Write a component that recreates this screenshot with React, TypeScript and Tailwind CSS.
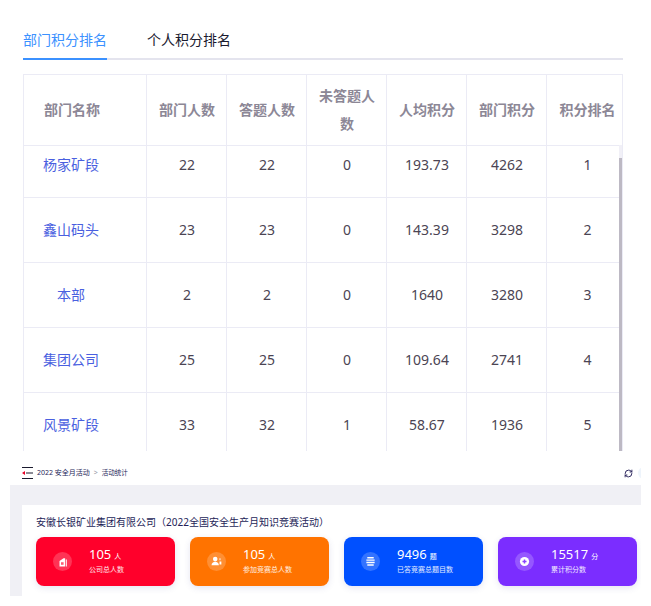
import { RefreshCw } from 'lucide-react';
import type { ReactNode } from 'react';

const font = { cn: "font-['Noto_Sans','Noto_Sans_CJK_SC',sans-serif]" };

const columns = ['部门名称', '部门人数', '答题人数', '未答题人数', '人均积分', '部门积分', '积分排名'];

const rows = [
  { name: '杨家矿段', values: ['22', '22', '0', '193.73', '4262', '1'], height: 'h-[52px]', pad: 'pb-[15px]' },
  { name: '鑫山码头', values: ['23', '23', '0', '143.39', '3298', '2'], height: 'h-[65px]', pad: 'pb-[2px]' },
  { name: '本部', values: ['2', '2', '0', '1640', '3280', '3'], height: 'h-[65px]', pad: 'pb-[2px]' },
  { name: '集团公司', values: ['25', '25', '0', '109.64', '2741', '4'], height: 'h-[65px]', pad: 'pb-[2px]' },
  { name: '风景矿段', values: ['33', '32', '1', '58.67', '1936', '5'], height: 'h-[65px]', pad: 'pb-[2px]' },
];

const stats: { value: string; unit: string; label: string; color: string; icon: ReactNode }[] = [
  {
    value: '105',
    unit: '人',
    label: '公司总人数',
    color: 'bg-[#ff002b]',
    icon: (
      <svg viewBox="0 0 10 10" className="h-[10px] w-[10px]" fill="white">
        <path d="M1.5 4 5.5 1.2h1.6V9.5H1.5z" />
        <path d="M7.8 2.5h1V9.5h-1z" />
        <path d="M3 5.2h2.6v2.6H3z" fill="#ff5a74" />
      </svg>
    ),
  },
  {
    value: '105',
    unit: '人',
    label: '参加竞赛总人数',
    color: 'bg-[#ff7300]',
    icon: (
      <svg viewBox="0 0 12 12" className="h-[11px] w-[11px]" fill="white">
        <circle cx="4.6" cy="3.4" r="2.5" />
        <path d="M.6 10.2c0-2.6 1.8-4 4-4s4 1.4 4 4z" />
        <path d="M9.3 2.4h1v2.2h-1zM9.3 6h2v3.4h-2z" />
      </svg>
    ),
  },
  {
    value: '9496',
    unit: '题',
    label: '已答竞赛总题目数',
    color: 'bg-[#0050ff]',
    icon: (
      <svg viewBox="0 0 12 12" className="h-[11px] w-[11px]" fill="white">
        <path d="M2.5 1h7v1.6h-7zM1.5 3.7h9v1.6h-9zM1.5 6.4h9V8h-9zM2.5 9.1h7v1.6h-7z" />
      </svg>
    ),
  },
  {
    value: '15517',
    unit: '分',
    label: '累计积分数',
    color: 'bg-[#7b2dff]',
    icon: (
      <svg viewBox="0 0 12 12" className="h-[11px] w-[11px]">
        <circle cx="6" cy="6" r="5" fill="white" />
        <path d="M5.2 3.8h1.6v1.4h1.4v1.6H6.8v1.4H5.2V6.8H3.8V5.2h1.4z" fill="#8a45ff" />
      </svg>
    ),
  },
];

function ScoreTable() {
  return (
    <div className="relative mx-[23px] mt-[14px] h-[377px] w-[600px] overflow-hidden">
      <table className="w-[600px] table-fixed border-collapse border-t border-l border-[#ebebf5]">
        <colgroup>
          <col className="w-[123px]" />
          <col className="w-[80px]" />
          <col className="w-[80px]" />
          <col className="w-[80px]" />
          <col className="w-[80px]" />
          <col className="w-[80px]" />
          <col className="w-[76px]" />
        </colgroup>
        <thead>
          <tr className="h-[71px]">
            {columns.map((col, i) => (
              <th
                key={col}
                className={`border border-[#ebebf5] text-[14px] leading-[28px] font-bold text-[#8c8796] ${
                  i === 0
                    ? 'pr-[36px] pl-[20px] text-left'
                    : i === 6
                      ? 'pr-0 pl-[6px] text-center'
                      : 'pr-[10px] pl-[11px] text-center'
                }`}
              >
                {col}
              </th>
            ))}
          </tr>
        </thead>
        <tbody>
          {rows.map((row) => (
            <tr key={row.name} className={row.height}>
              <td className={`border border-[#ebebf5] pl-[19px] text-[14px] text-[#4a5fe0] ${row.pad}`}>
                <div className="w-[56px] text-center">{row.name}</div>
              </td>
              {row.values.map((value, i) => (
                <td
                  key={i}
                  className={`border border-[#ebebf5] text-center text-[14px] text-[#4b4453] ${row.pad} ${
                    i === 5 ? 'pl-[6px]' : 'pl-[1px]'
                  }`}
                >
                  {value}
                </td>
              ))}
            </tr>
          ))}
        </tbody>
      </table>
      <div className="absolute top-[71px] right-[1px] bottom-0 w-[3px] bg-[#f1f0f7]">
        <div className="mt-[13px] h-full bg-[#bdb9c4]" />
      </div>
    </div>
  );
}

function StatCard({ value, unit, label, color, icon }: (typeof stats)[number]) {
  return (
    <div className={`flex h-[49px] w-[139px] items-center rounded-[8px] pl-[17px] shadow-[0_2px_6px_rgba(80,80,160,0.15)] ${color}`}>
      <div className="flex h-[19px] w-[19px] items-center justify-center rounded-full bg-white/20">{icon}</div>
      <div className="mb-[3px] ml-[17px] text-white">
        <div className="flex items-baseline gap-[3px] text-[13px] leading-[16px]">
          {value}
          <span className="text-[7px]">{unit}</span>
        </div>
        <div className="text-[7px] leading-[9px] text-white/90">{label}</div>
      </div>
    </div>
  );
}

export default function App() {
  return (
    <div className={`h-[606px] w-[651px] overflow-hidden bg-white ${font.cn}`}>
      <div className="ml-[23px] flex h-[60px] w-[600px] items-end gap-[40px] border-b-2 border-[#e4e4ee] text-[14px] leading-[20px]">
        <div className="-mb-[2px] border-b-2 border-[#3b91ff] pb-[8px] text-[#3b91ff]">部门积分排名</div>
        <div className="-mb-[2px] border-b-2 border-transparent pb-[8px] text-[#1a1a2e]">个人积分排名</div>
      </div>

      <ScoreTable />

      <div className="ml-[10px] w-[631px] overflow-hidden">
        <div className="mt-[10px] flex h-[24px] items-center justify-between pl-[12px] text-[7px] text-[#241e58]">
          <div className="flex items-center">
            <svg viewBox="0 0 11 12" className="mr-[4px] h-[12px] w-[11px]">
              <path d="M0 .5h11M0 11.5h11M4 6h7" stroke="#1a1a2e" strokeWidth="1" />
              <path d="M0 6l3-2v4z" fill="#e60026" />
            </svg>
            <span>2022 安全月活动</span>
            <span className="mx-[4px] text-[#9a9aaa]">&gt;</span>
            <span className="text-[6.5px]">活动统计</span>
          </div>
          <div className="flex items-center gap-[5px]">
            <RefreshCw className="h-[9px] w-[9px] text-[#241e58]" strokeWidth={2.5} />
            <div className="-mr-[9px] h-[12px] w-[12px] rounded-full bg-[#eef4fb]" />
          </div>
        </div>

        <div className="h-[111px] bg-[#f0f0f5] pt-[20px] pl-[12px]">
          <div className="h-[91px] bg-white pt-[10px] pl-[14px]">
            <div className="text-[10px] leading-[14px] text-[#241e58]">安徽长银矿业集团有限公司（2022全国安全生产月知识竞赛活动）</div>
            <div className="mt-[8px] flex gap-[15px]">
              {stats.map((s) => (
                <StatCard key={s.label} {...s} />
              ))}
            </div>
          </div>
        </div>
      </div>
    </div>
  );
}
